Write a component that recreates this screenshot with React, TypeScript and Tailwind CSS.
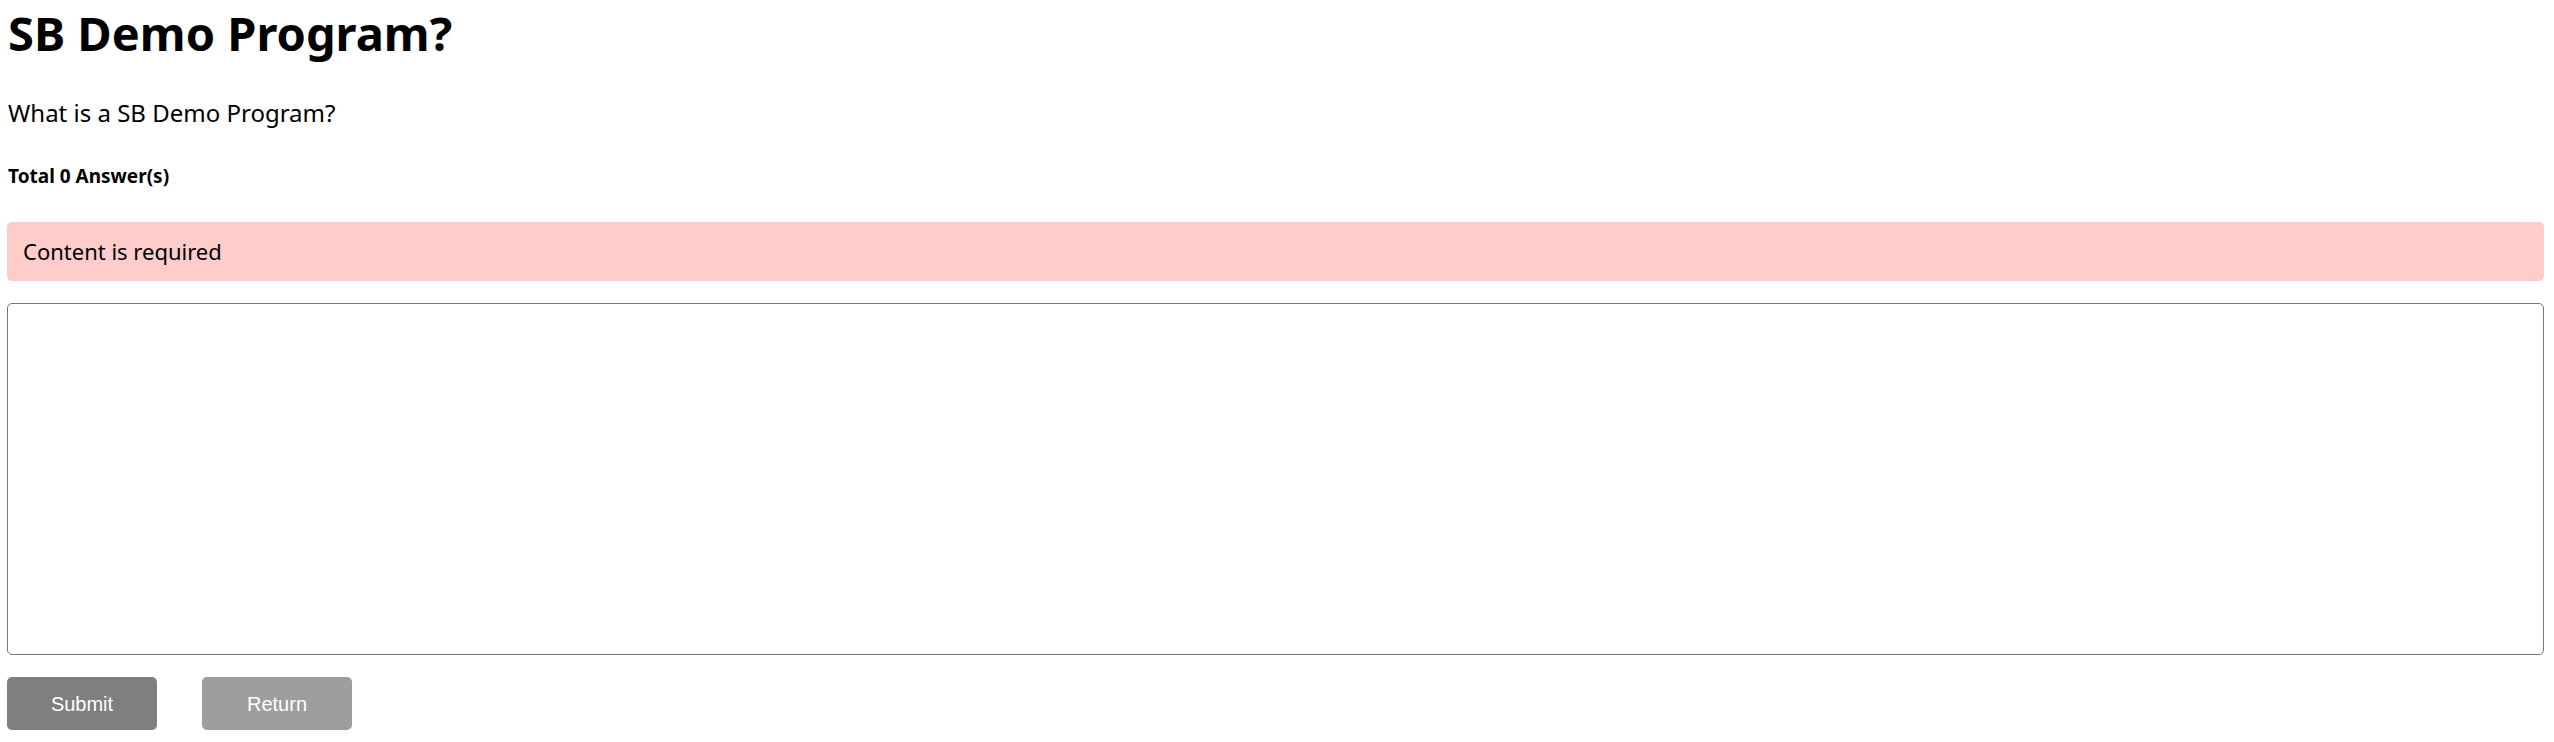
export default function App() {
  return (
    <div className="w-[2554px] h-[742px] bg-white pl-[7px] flex flex-col" style={{ fontFamily: '"Noto Sans", sans-serif' }}>
      <h1 className="pl-px text-[47px] leading-[66px] font-bold text-black">SB Demo Program?</h1>
      <p className="pl-px mt-[32px] text-[24px] leading-[30px] text-black">What is a SB Demo Program?</p>
      <p className="pl-px mt-[36px] text-[19px] leading-[24px] font-bold text-black">Total 0 Answer(s)</p>
      <div className="mt-[34px] w-[2537px] h-[59px] rounded-[5px] bg-[#ffcccc] flex items-center px-[16px] text-[22px] text-black">
        Content is required
      </div>
      <textarea className="mt-[22px] w-[2537px] h-[352px] rounded-[5px] border border-[#767676] resize-none outline-none p-2" />
      <div className="mt-[22px] flex gap-[45px]" style={{ fontFamily: '"Liberation Sans", Arial, sans-serif' }}>
        <button className="w-[150px] h-[53px] rounded-[5px] bg-[#7f7f7f] text-white text-[20px]">Submit</button>
        <button className="w-[150px] h-[53px] rounded-[5px] bg-[#9e9e9e] text-white text-[20px]">Return</button>
      </div>
    </div>
  );
}
